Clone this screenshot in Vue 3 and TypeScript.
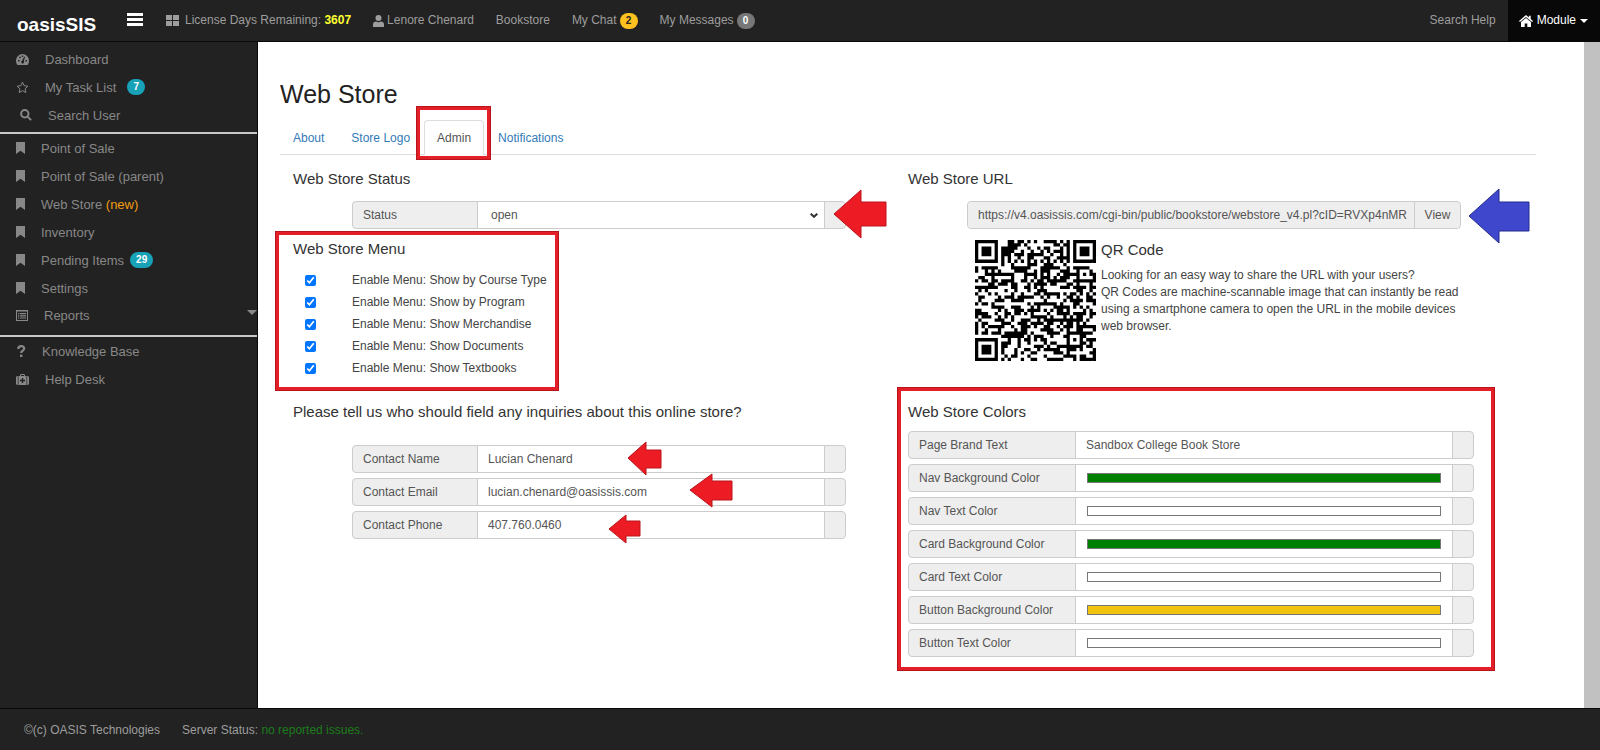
<script setup lang="ts">
import { ref } from 'vue'

interface Field {
  id: string
  label: string
  value: string
}

const storeUrl = 'https://v4.oasissis.com/cgi-bin/public/bookstore/webstore_v4.pl?cID=RVXp4nMR'

const tabs = ['About', 'Store Logo', 'Admin', 'Notifications']
const activeTab = ref('Admin')
const status = ref('open')

const menus = ref([
  { id: 'm-course', label: 'Enable Menu: Show by Course Type', on: true },
  { id: 'm-program', label: 'Enable Menu: Show by Program', on: true },
  { id: 'm-merch', label: 'Enable Menu: Show Merchandise', on: true },
  { id: 'm-docs', label: 'Enable Menu: Show Documents', on: true },
  { id: 'm-books', label: 'Enable Menu: Show Textbooks', on: true },
])

const contacts = ref<Field[]>([
  { id: 'c-name', label: 'Contact Name', value: 'Lucian Chenard' },
  { id: 'c-email', label: 'Contact Email', value: 'lucian.chenard@oasissis.com' },
  { id: 'c-phone', label: 'Contact Phone', value: '407.760.0460' },
])

const brandText = ref('Sandbox College Book Store')
const colors = ref<Field[]>([
  { id: 'k-nav-bg', label: 'Nav Background Color', value: '#008000' },
  { id: 'k-nav-tx', label: 'Nav Text Color', value: '#ffffff' },
  { id: 'k-card-bg', label: 'Card Background Color', value: '#008000' },
  { id: 'k-card-tx', label: 'Card Text Color', value: '#ffffff' },
  { id: 'k-btn-bg', label: 'Button Background Color', value: '#f1c40f' },
  { id: 'k-btn-tx', label: 'Button Text Color', value: '#ffffff' },
])

const modules = ['Point of Sale', 'Point of Sale (parent)', 'Web Store', 'Inventory', 'Pending Items', 'Settings']

// QR code, version 5 (37 x 37 modules), level M, byte mode, mask 2.
const QR_SIZE = 37
const BLOCKS = 2
const BLOCK_DATA = 43
const BLOCK_ECC = 24
const MASK = 2

function gfMul(a: number, b: number): number {
  let r = 0
  for (let i = 7; i >= 0; i--) {
    r = (r << 1) ^ ((r >>> 7) * 0x11d)
    r ^= ((b >>> i) & 1) * a
  }
  return r
}

function eccFor(data: number[], degree: number): number[] {
  const gen: number[] = new Array(degree).fill(0)
  gen[degree - 1] = 1
  let root = 1
  for (let i = 0; i < degree; i++) {
    for (let j = 0; j < degree; j++) {
      gen[j] = gfMul(gen[j], root)
      if (j + 1 < degree) gen[j] ^= gen[j + 1]
    }
    root = gfMul(root, 2)
  }
  const rem: number[] = new Array(degree).fill(0)
  for (const b of data) {
    const f = b ^ (rem.shift() as number)
    rem.push(0)
    gen.forEach((g, i) => (rem[i] ^= gfMul(g, f)))
  }
  return rem
}

function codewords(text: string): number[] {
  const bits: number[] = []
  const put = (v: number, n: number) => {
    for (let i = n - 1; i >= 0; i--) bits.push((v >>> i) & 1)
  }
  put(4, 4)
  put(text.length, 8)
  for (let i = 0; i < text.length; i++) put(text.charCodeAt(i), 8)
  const total = BLOCKS * BLOCK_DATA
  put(0, Math.min(4, total * 8 - bits.length))
  while (bits.length % 8) bits.push(0)
  for (let pad = 0xec; bits.length < total * 8; pad ^= 0xec ^ 0x11) put(pad, 8)
  const bytes: number[] = []
  for (let i = 0; i < bits.length; i += 8) bytes.push(parseInt(bits.slice(i, i + 8).join(''), 2))
  const data: number[][] = []
  for (let b = 0; b < BLOCKS; b++) data.push(bytes.slice(b * BLOCK_DATA, (b + 1) * BLOCK_DATA))
  const ecc = data.map((d) => eccFor(d, BLOCK_ECC))
  const out: number[] = []
  for (let i = 0; i < BLOCK_DATA; i++) for (const d of data) out.push(d[i])
  for (let i = 0; i < BLOCK_ECC; i++) for (const e of ecc) out.push(e[i])
  return out
}

function qrMatrix(text: string): boolean[][] {
  const n = QR_SIZE
  const m: boolean[][] = Array.from({ length: n }, () => new Array(n).fill(false))
  const fixed: boolean[][] = Array.from({ length: n }, () => new Array(n).fill(false))
  const set = (x: number, y: number, v: boolean) => {
    if (x < 0 || y < 0 || x >= n || y >= n) return
    m[y][x] = v
    fixed[y][x] = true
  }
  for (let i = 0; i < n; i++) {
    set(6, i, i % 2 === 0)
    set(i, 6, i % 2 === 0)
  }
  for (const [cx, cy] of [[3, 3], [n - 4, 3], [3, n - 4]]) {
    for (let dy = -4; dy <= 4; dy++)
      for (let dx = -4; dx <= 4; dx++) {
        const d = Math.max(Math.abs(dx), Math.abs(dy))
        set(cx + dx, cy + dy, d !== 2 && d !== 4)
      }
  }
  for (let dy = -2; dy <= 2; dy++)
    for (let dx = -2; dx <= 2; dx++) set(30 + dx, 30 + dy, Math.max(Math.abs(dx), Math.abs(dy)) !== 1)

  let rem = MASK
  for (let i = 0; i < 10; i++) rem = (rem << 1) ^ ((rem >>> 9) * 0x537)
  const fmt = ((MASK << 10) | rem) ^ 0x5412
  const bit = (i: number) => ((fmt >>> i) & 1) === 1
  for (let i = 0; i <= 5; i++) set(8, i, bit(i))
  set(8, 7, bit(6))
  set(8, 8, bit(7))
  set(7, 8, bit(8))
  for (let i = 9; i < 15; i++) set(14 - i, 8, bit(i))
  for (let i = 0; i < 8; i++) set(n - 1 - i, 8, bit(i))
  for (let i = 8; i < 15; i++) set(8, n - 15 + i, bit(i))
  set(8, n - 8, true)

  const words = codewords(text)
  let k = 0
  for (let right = n - 1; right >= 1; right -= 2) {
    if (right === 6) right = 5
    for (let v = 0; v < n; v++)
      for (let j = 0; j < 2; j++) {
        const x = right - j
        const y = ((right + 1) & 2) === 0 ? n - 1 - v : v
        if (fixed[y][x]) continue
        const dark = k < words.length * 8 && ((words[k >>> 3] >>> (7 - (k & 7))) & 1) === 1
        k++
        m[y][x] = dark !== (x % 3 === 0)
      }
  }
  return m
}

const qr = qrMatrix(storeUrl)
  .map((row, y) => row.map((v, x) => (v ? `M${x} ${y}h1v1h-1z` : '')).join(''))
  .join('')
</script>

<template>
  <div class="page">
    <header class="topbar">
      <a class="brand" href="#">oasisSIS</a>
      <button class="burger" type="button" aria-label="Toggle menu"><i></i><i></i><i></i></button>
      <nav class="links">
        <a href="#"><svg width="13" height="11" viewBox="0 0 13 11"><path d="M0 0h6v5H0zM7 0h6v5H7zM0 6h6v5H0zM7 6h6v5H7z" /></svg><span>License Days Remaining: <b>3607</b></span></a>
        <a class="user" href="#"><svg width="11" height="12" viewBox="0 0 11 12"><circle cx="5.500" cy="3" r="3" /><path d="M0 12V9.500C0 7.500 1.500 6.600 3 6.600c1.500.8 3.500.8 5 0 1.500 0 3 .9 3 2.900V12z" /></svg><span>Lenore Chenard</span></a>
        <a href="#">Bookstore</a>
        <a class="count" href="#">My Chat <span class="badge amber">2</span></a>
        <a class="count" href="#">My Messages <span class="badge grey">0</span></a>
      </nav>
      <a class="help" href="#">Search Help</a>
      <button class="module" type="button">
        <svg width="14" height="12" viewBox="0 0 14 12"><path d="M7 0 0 6l.9 1L7 1.900 13.100 7l.9-1-2.300-2V.7H9.900v1.800z" /><path d="M7 2.900 2 7.100V12h3.700V8.500h2.600V12H12V7.100z" /></svg>
        Module
        <svg width="8" height="4" viewBox="0 0 8 4"><path d="M0 0h8L4 4z" /></svg>
      </button>
    </header>

    <div class="body">
      <aside class="sidebar">
        <nav>
          <ul class="first">
            <li><a href="#"><svg width="13" height="11" viewBox="0 0 13 11"><path fill-rule="evenodd" d="M6.500 0A6.500 6.500 0 0 0 0 6.500C0 8.200.5 9.700 1.400 11h10.200c.9-1.300 1.400-2.800 1.400-4.500A6.500 6.500 0 0 0 6.500 0zM2 6h1.600v1.500H2zM3.300 2.800h1.500v1.500H3.300zM5.800 1.500h1.400V3H5.800zM9.400 6H11v1.500H9.400zM8.300 2.600l.8.300-1.300 4.200c1 1.300 0 2.500-1.300 2.400-1.400-.2-1.900-2-.5-2.800z" /></svg>Dashboard</a></li>
            <li><a href="#"><svg width="13" height="13" viewBox="0 0 13 13"><path class="line" d="m6.500 1.200 1.600 3.500 3.800.5-2.800 2.600.7 3.800-3.300-1.900-3.300 1.900.7-3.800L1.100 5.200l3.800-.5z" /></svg>My Task List<span class="badge teal wide">7</span></a></li>
            <li><a class="inset" href="#"><svg width="12" height="12" viewBox="0 0 12 12"><circle class="ring" cx="4.800" cy="4.800" r="3.700" /><path class="ring" d="m7.600 7.600 3.500 3.500" /></svg>Search User</a></li>
          </ul>
          <ul>
            <li v-for="name in modules" :key="name">
              <a href="#"><svg width="9" height="12" viewBox="0 0 9 12"><path d="M0 0h9v12L4.500 8.800 0 12z" /></svg><span>{{ name }}<em v-if="name === 'Web Store'"> (new)</em></span><span v-if="name === 'Pending Items'" class="badge teal tight">29</span></a>
            </li>
            <li class="reports"><a href="#"><svg width="12" height="11" viewBox="0 0 12 11"><path fill-rule="evenodd" d="M0 0h12v11H0zM1 1.500v8.500h10V1.500z" /><path d="M2 3h1.300v1.200H2zM4 3h6v1.200H4zM2 5.200h1.300v1.200H2zM4 5.200h6v1.200H4zM2 7.400h1.300v1.200H2zM4 7.400h6v1.200H4z" /></svg>Reports<svg class="caret" width="10" height="5" viewBox="0 0 10 5"><path d="M0 0h10L5 5z" /></svg></a></li>
          </ul>
          <ul>
            <li><a href="#"><svg width="10" height="12" viewBox="0 0 10 12"><path class="query" d="M2.300 4c0-3.800 5.900-3.700 5.900-.4C8.200 5.600 5.200 5.800 5.200 8" /><path d="M4 9.600h2.400V12H4z" /></svg>Knowledge Base</a></li>
            <li><a href="#"><svg width="13" height="11" viewBox="0 0 13 11"><path fill-rule="evenodd" d="M2.500 2H4V.9L4.900 0h3.200L9 .9V2h1.500v9h-8zM5 1v1h3V1zM5.800 4v1.800H4v1.400h1.800V9h1.400V7.200H9V5.800H7.200V4z" /><path d="M0 3l1-1h.8v9H1l-1-1zM13 3l-1-1h-.8v9h.8l1-1z" /></svg>Help Desk</a></li>
          </ul>
        </nav>
      </aside>

      <main class="main">
        <h1>Web Store</h1>
        <ul class="tabs">
          <li v-for="t in tabs" :key="t" :class="{ active: t === activeTab }">
            <a href="#" @click.prevent="activeTab = t">{{ t }}</a>
            <span v-if="t === 'Admin'" class="mark tab-mark"></span>
          </li>
        </ul>

        <div class="columns">
          <div class="col">
            <h2>Web Store Status</h2>
            <div class="group inset-group">
              <label for="status">Status</label>
              <div class="cell">
                <select id="status" v-model="status"><option>open</option><option>closed</option></select>
                <svg class="chevron" width="8" height="5" viewBox="0 0 8 5"><path d="m.7.7 3.300 3.100L7.300.7" /></svg>
              </div>
              <span class="addon"></span>
              <svg class="arrow arrow-status" width="54" height="50" viewBox="0 0 54 50"><path d="M1 25 28 1v12h25v24H28v12z" /></svg>
            </div>

            <section class="menu">
              <h2>Web Store Menu</h2>
              <div v-for="m in menus" :key="m.id" class="check">
                <input :id="m.id" v-model="m.on" type="checkbox" />
                <label :for="m.id">{{ m.label }}</label>
              </div>
              <span class="mark menu-mark"></span>
            </section>

            <h2 class="ask">Please tell us who should field any inquiries about this online store?</h2>
            <div class="stack inset-group">
              <div v-for="c in contacts" :key="c.id" class="group">
                <label :for="c.id">{{ c.label }}</label>
                <input :id="c.id" v-model="c.value" class="cell" type="text" />
                <span class="addon"></span>
              </div>
              <svg class="arrow arrow-name" width="35" height="35" viewBox="0 0 35 35"><path d="M1 17 19 1v8h15v18H19v7z" /></svg>
              <svg class="arrow arrow-email" width="44" height="35" viewBox="0 0 44 35"><path d="M1 17 23 1v7h20v19H23v7z" /></svg>
              <svg class="arrow arrow-phone" width="33" height="30" viewBox="0 0 33 30"><path d="M1 15 18 1v6h14v15H18v7z" /></svg>
            </div>
          </div>

          <div class="col">
            <h2>Web Store URL</h2>
            <div class="group inset-group">
              <input class="cell url" type="text" readonly aria-label="Web Store URL" :value="storeUrl" />
              <button class="view" type="button">View</button>
              <svg class="arrow blue arrow-url" width="62" height="56" viewBox="0 0 62 56"><path d="M1 28 31 1v13h30v29H31v12z" /></svg>
            </div>

            <section class="share">
              <svg class="qr" viewBox="0 0 37 37" role="img" aria-label="QR code"><path :d="qr" /></svg>
              <div>
                <h2>QR Code</h2>
                <p>Looking for an easy way to share the URL with your users?<br />QR Codes are machine-scannable image that can instantly be read using a smartphone camera to open the URL in the mobile devices web browser.</p>
              </div>
            </section>

            <section class="colors">
              <h2>Web Store Colors</h2>
              <div class="stack">
                <div class="group">
                  <label for="brand">Page Brand Text</label>
                  <input id="brand" v-model="brandText" class="cell" type="text" />
                  <span class="addon"></span>
                </div>
                <div v-for="c in colors" :key="c.id" class="group">
                  <label :for="c.id">{{ c.label }}</label>
                  <input :id="c.id" v-model="c.value" class="cell swatch" type="color" />
                  <span class="addon"></span>
                </div>
              </div>
              <span class="mark colors-mark"></span>
            </section>
          </div>
        </div>
      </main>
      <div class="scrollbar" aria-hidden="true"></div>
    </div>

    <footer class="footer">
      <span>©(c) OASIS Technologies</span>
      <span>Server Status: <a href="#">no reported issues.</a></span>
    </footer>
  </div>
</template>

<style>
body {
  margin: 0;
  background: #fff;
}
</style>

<style scoped>
.page {
  display: flex;
  flex-direction: column;
  min-height: 100vh;
  font-family: "Liberation Sans", Arial, sans-serif;
  font-size: 12px;
  line-height: 17px;
  color: #444;
}
.page *,
.page *::before,
.page *::after {
  box-sizing: border-box;
}
a {
  color: inherit;
  text-decoration: none;
}
ul {
  margin: 0;
  padding: 0;
  list-style: none;
}
button,
input,
select {
  margin: 0;
  border: 0;
  border-radius: 0;
  font: inherit;
  color: inherit;
}
svg {
  display: block;
  flex: none;
  fill: currentColor;
}

.topbar {
  display: flex;
  align-items: center;
  height: 42px;
  background: #222;
  border-bottom: 1px solid #080808;
  color: #9d9d9d;
}
.brand {
  width: 109px;
  padding: 8px 0 0 17px;
  color: #fff;
  font-size: 19px;
  font-weight: 700;
  line-height: 26px;
}
.burger {
  display: flex;
  flex-direction: column;
  gap: 2px;
  width: 34px;
  padding: 0 0 3px 18px;
  background: none;
}
.burger i {
  height: 3px;
  background: #fff;
}
.links {
  display: flex;
  align-items: center;
  gap: 22px;
  flex: 1;
  padding-left: 23px;
  white-space: nowrap;
}
.links a {
  display: flex;
  align-items: center;
  gap: 6px;
}
.links .user,
.links .count {
  gap: 3px;
}
.links b {
  color: #ff3;
}
.badge {
  min-width: 18px;
  padding: 0 6px;
  border-radius: 8px;
  font-size: 10px;
  font-weight: 700;
  line-height: 16px;
  text-align: center;
}
.amber {
  background: #ffc11f;
  color: #222;
}
.grey {
  background: #777;
  color: #fff;
}
.teal {
  background: #17a2b8;
  color: #fff;
}
.help {
  padding-right: 12px;
}
.module {
  display: flex;
  align-items: center;
  gap: 4px;
  height: 41px;
  padding: 0 12px 0 11px;
  background: #080808;
  color: #fff;
}

.body {
  display: flex;
  flex: 1;
}
.sidebar {
  flex: none;
  width: 258px;
  padding-top: 3px;
  background: #222;
  border-right: 1px solid #080808;
  color: #888;
  font-size: 13px;
}
.sidebar ul + ul {
  border-top: 2px solid #c8c8c8;
}
.sidebar .first {
  padding-bottom: 3px;
}
.sidebar a {
  display: flex;
  align-items: center;
  gap: 16px;
  height: 28px;
  padding-left: 16px;
}
.sidebar a.inset {
  padding-left: 20px;
}
.sidebar em {
  color: #f39c12;
  font-style: normal;
}
.sidebar .wide {
  margin-left: -5px;
}
.sidebar .tight {
  margin-left: -10px;
}
.reports {
  padding-bottom: 7px;
}
.reports a {
  height: 26px;
}
.caret {
  margin: 0 0 5px auto;
}
.line {
  fill: none;
  stroke: currentColor;
}
.ring {
  fill: none;
  stroke: currentColor;
  stroke-width: 2;
}
.query {
  fill: none;
  stroke: currentColor;
  stroke-width: 2.2;
}

.main {
  flex: 1;
  min-width: 0;
  padding: 37px 48px 24px 22px;
  background: #fff;
}
.scrollbar {
  flex: none;
  width: 16px;
  background: #c1c1c1;
}
h1,
h2 {
  margin: 0;
  color: #222;
  font-weight: 400;
}
h1 {
  font-size: 25px;
  line-height: 30px;
}
h2 {
  font-size: 15px;
  line-height: 20px;
  color: #333;
}
.tabs {
  display: flex;
  gap: 1px;
  margin-top: 11px;
  border-bottom: 1px solid #ddd;
}
.tabs li {
  position: relative;
}
.tabs a {
  display: block;
  margin-bottom: -1px;
  padding: 9px 12px 8px;
  border: 1px solid transparent;
  border-bottom: 0;
  border-radius: 4px 4px 0 0;
  color: #337ab7;
}
.tabs .active a {
  border-color: #ddd;
  background: #fff;
  color: #555;
}

.mark {
  position: absolute;
  border: 4px solid #e32027;
  outline: 1px solid #b8141b;
  outline-offset: -1px;
  pointer-events: none;
}
.tab-mark {
  inset: -14px -7px -6px -8px;
}
.menu-mark {
  inset: -8px 349px -12px -18px;
}
.colors-mark {
  inset: -15px -21px -14px -11px;
}

.columns {
  display: grid;
  grid-template-columns: 1fr 1fr;
  padding: 14px 13px 0;
}
.col > .group {
  margin-top: 12px;
}
.inset-group {
  position: relative;
  margin-left: 59px;
  margin-right: 62px;
}
.stack {
  display: grid;
  gap: 5px;
}
.group {
  display: flex;
  height: 28px;
  border: 1px solid #ccc;
  border-radius: 4px;
  background: #eee;
  color: #555;
}
.group > label {
  flex: none;
  width: 125px;
  padding: 0 10px;
  border-right: 1px solid #ccc;
  line-height: 26px;
}
.cell {
  position: relative;
  flex: 1;
  min-width: 0;
  height: 26px;
  padding: 0 10px;
  background: #fff;
}
.addon {
  flex: none;
  width: 21px;
  border-left: 1px solid #ccc;
}
div.cell {
  padding: 0;
}
.cell select {
  width: 100%;
  height: 26px;
  padding: 0 13px;
  appearance: none;
  background: transparent;
}
.chevron {
  position: absolute;
  right: 6px;
  top: 11px;
  fill: none;
  stroke: #333;
  stroke-width: 2;
  pointer-events: none;
}
.cell.url {
  padding: 0 0 0 10px;
  border-radius: 4px 0 0 4px;
  background: #eee;
}
.view {
  width: 46px;
  padding: 0;
  border-left: 1px solid #ccc;
  border-radius: 0 4px 4px 0;
  background: #eee;
}
.menu {
  position: relative;
  margin-top: 10px;
}
.menu h2 {
  margin-bottom: 10px;
}
.check {
  display: flex;
  align-items: center;
  height: 22px;
}
.check input {
  width: 11px;
  height: 11px;
  margin: 0 36px 0 12px;
  accent-color: #0075ff;
}
.ask {
  margin: 23px 0;
}

.share {
  display: flex;
  gap: 5px;
  margin: 11px 48px 0 67px;
}
.share h2 {
  margin-bottom: 7px;
}
.share p {
  margin: 0;
}
.qr {
  width: 121px;
  height: 121px;
  fill: #000;
}
.colors {
  position: relative;
  margin: 41px 49px 0 0;
}
.colors h2 {
  margin-bottom: 9px;
}
.colors .group > label {
  width: 167px;
}
.swatch {
  padding: 8px 11px;
  cursor: pointer;
}
.swatch::-webkit-color-swatch-wrapper {
  padding: 0;
}
.swatch::-webkit-color-swatch {
  border: 1px solid #777;
  border-radius: 0;
}

.arrow {
  position: absolute;
  fill: #ed1c24;
  stroke: #b8141b;
  pointer-events: none;
}
.arrow.blue {
  fill: #3f48cc;
  stroke: #252c8c;
}
.arrow-status {
  left: calc(100% - 12px);
  top: -13px;
}
.arrow-url {
  left: calc(100% + 8px);
  top: -14px;
}
.arrow-name {
  left: 275px;
  top: -4px;
}
.arrow-email {
  left: 337px;
  top: 28px;
}
.arrow-phone {
  left: 256px;
  top: 69px;
}

.footer {
  display: flex;
  align-items: center;
  gap: 22px;
  height: 42px;
  padding: 2px 0 0 24px;
  border-top: 1px solid #080808;
  background: #222;
  color: #9d9d9d;
}
.footer a {
  color: #1c7c1c;
}
</style>
